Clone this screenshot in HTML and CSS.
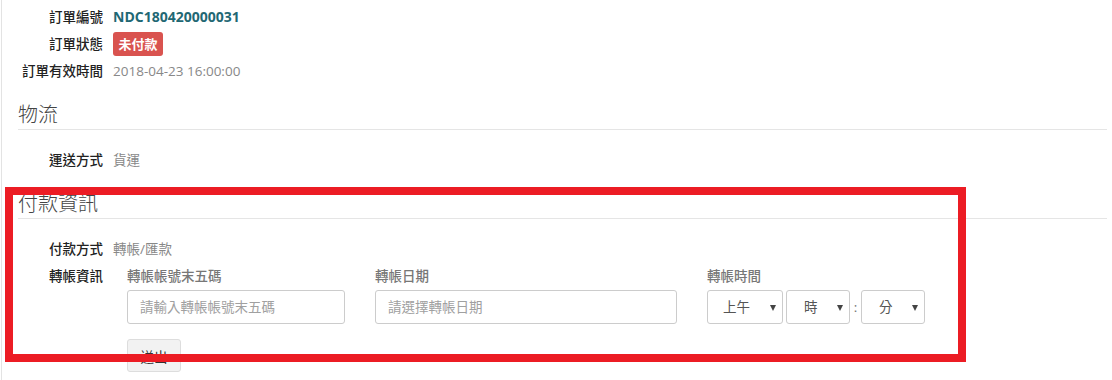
FILE: index.html
```html
<!DOCTYPE html>
<html>
    <head>
        <title>訂單明細</title><meta charset="UTF-8">
        <link rel="stylesheet" href="styles.css">
    </head>
    <body>
        <div class="page">
            <div class="row">
                <div class="label">訂單編號</div>
                <div class="value order-no">NDC180420000031</div>
            </div>
            <div class="row tall">
                <div class="label">訂單狀態</div>
                <div class="value"><span class="badge">未付款</span></div>
            </div>
            <div class="row">
                <div class="label">訂單有效時間</div>
                <div class="value muted">2018-04-23 16:00:00</div>
            </div>

            <h3 class="title">物流</h3>
            <div class="row first">
                <div class="label">運送方式</div>
                <div class="value muted">貨運</div>
            </div>

            <h3 class="title">付款資訊</h3>
            <div class="row first">
                <div class="label">付款方式</div>
                <div class="value muted">轉帳/匯款</div>
            </div>
            <div class="row spaced">
                <div class="label">轉帳資訊</div>
                <div class="transfer">
                    <div class="field">
                        <div class="sub">轉帳帳號末五碼</div>
                        <div class="input">請輸入轉帳帳號末五碼</div>
                    </div>
                    <div class="field">
                        <div class="sub">轉帳日期</div>
                        <div class="input">請選擇轉帳日期</div>
                    </div>
                    <div class="field">
                        <div class="sub">轉帳時間</div>
                        <div class="time">
                            <div class="select ampm">上午<span class="arrow"></span></div>
                            <div class="select hour">時<span class="arrow"></span></div>
                            <span class="colon">:</span>
                            <div class="select min">分<span class="arrow"></span></div>
                        </div>
                    </div>
                    <div class="actions">
                        <button class="btn">送出</button>
                    </div>
                </div>
            </div>
        </div>
        <!-- highlight box -->
        <div class="mark"></div>
    </body>
</html>
```

FILE: styles.css
```css
*{margin: 0; padding: 0; box-sizing: border-box;}
body{font-family: "Open Sans", "Noto Sans CJK TC", sans-serif; font-size: 13.5px; color: #333; background: #fff; position: relative; height: 380px; overflow: hidden;}
.page{margin-left: 1px; border-left: 1px solid #e3e3e3; height: 380px; padding: 7px 5px 0 16px;}

.row{display: flex; align-items: flex-start; margin-bottom: 5px; line-height: 20px;}
.row.tall{line-height: 24px;}
.row.first{margin-top: 20px;}
.row.spaced{margin-top: 7px;}
.label{width: 85px; text-align: right; font-weight: 500; color: #222; flex-shrink: 0;}
.value{margin-left: 10px;}
.muted{color: #888;}
.order-no{font-weight: 700; color: #1f6874; font-size: 14px;}
.badge{display: inline-block; background: #d9534f; color: #fff; font-weight: 700; font-size: 13px; line-height: 24px; height: 24px; width: 50px; text-align: center; border-radius: 3px;}

.title{font-weight: 300; font-size: 20px; color: #444; line-height: 26px; padding-bottom: 1px; margin-top: 21px; border-bottom: 1px solid #e5e5e5;}

/* transfer form */
.transfer{display: grid; grid-template-columns: 218px 302px 218px; column-gap: 30px; margin-left: 24px; row-gap: 15px;}
.sub{color: #777; font-weight: 500; margin-bottom: 4px;}
.input{height: 34px; border: 1px solid #ccc; border-radius: 3px; color: #a0a0a0; padding-left: 12px; line-height: 32px;}
.time{display: flex; align-items: center; height: 34px;}
.select{position: relative; height: 34px; border: 1px solid #ccc; border-radius: 3px; line-height: 32px; color: #555; padding-left: 15px;}
.ampm{width: 76px;}
.hour{width: 64px; margin-left: 3px; padding-left: 17px;}
.min{width: 64px; padding-left: 17px;}
.colon{width: 11px; text-align: center; color: #777;}
.arrow{position: absolute; right: 6px; top: 14px; border-left: 3px solid transparent; border-right: 3px solid transparent; border-top: 6px solid #444;}
.actions{grid-column: 1 / 4;}
.btn{width: 54px; height: 33px; background: #f2f2f2; border: 1px solid #ddd; border-radius: 3px; font-family: inherit; font-size: 13.5px; color: #333;}

.mark{position: absolute; left: 5px; top: 187px; width: 961px; height: 175px; border: 8px solid #ec1c24;}
```
